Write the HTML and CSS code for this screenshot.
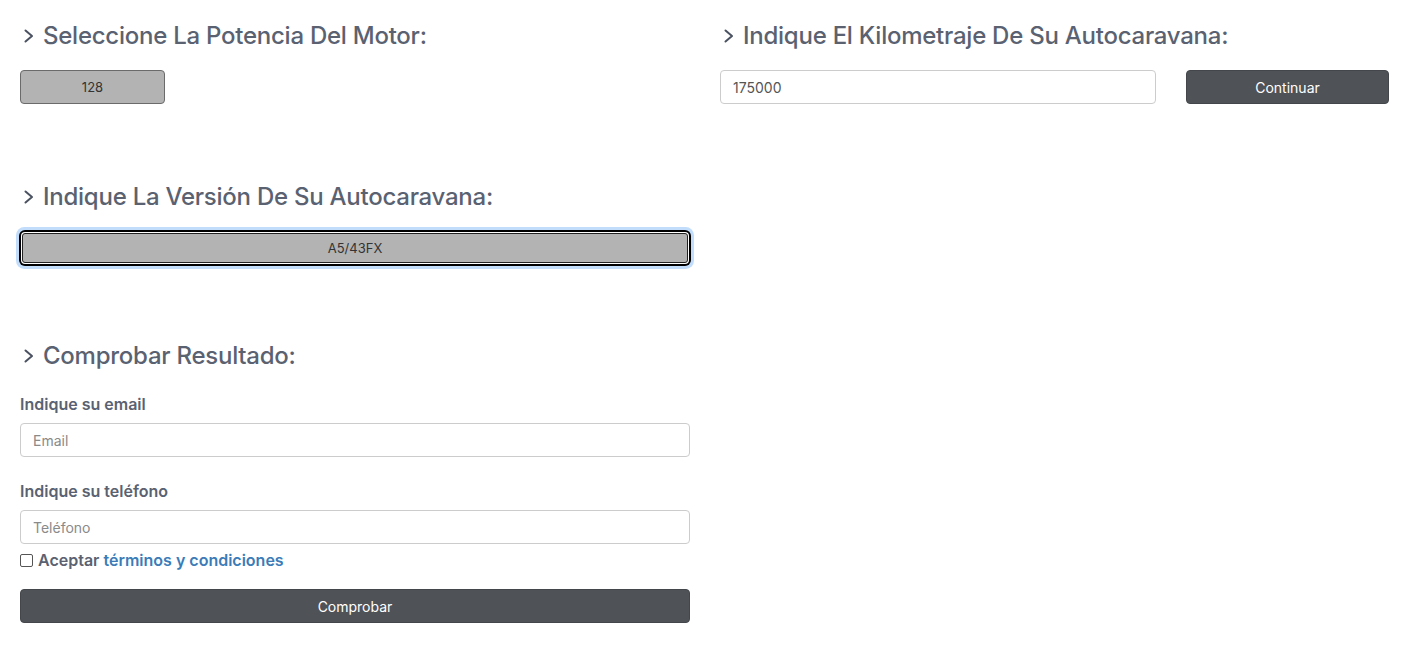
FILE: index.html
```html
<!DOCTYPE html>
<html lang="es">
<head>
<meta charset="utf-8">
<title>Autocaravana</title>
<link rel="stylesheet" href="styles.css">
</head>
<body>
<div class="page">
  <div class="col">
    <section class="step">
      <h2 class="title"><svg class="chev" viewBox="0 0 12 16" width="12" height="16"><path d="M2.5 2.5 L9 8 L2.5 13.5" fill="none" stroke="currentColor" stroke-width="2" stroke-linecap="round" stroke-linejoin="round"/></svg>Seleccione La Potencia Del Motor:</h2>
      <button class="opt opt-small">128</button>
    </section>
    <section class="step step-2">
      <h2 class="title"><svg class="chev" viewBox="0 0 12 16" width="12" height="16"><path d="M2.5 2.5 L9 8 L2.5 13.5" fill="none" stroke="currentColor" stroke-width="2" stroke-linecap="round" stroke-linejoin="round"/></svg>Indique La Versión De Su Autocaravana:</h2>
      <button class="opt opt-full focused">A5/43FX</button>
    </section>
    <section class="step step-3">
      <h2 class="title"><svg class="chev" viewBox="0 0 12 16" width="12" height="16"><path d="M2.5 2.5 L9 8 L2.5 13.5" fill="none" stroke="currentColor" stroke-width="2" stroke-linecap="round" stroke-linejoin="round"/></svg>Comprobar Resultado:</h2>
      <label class="lbl">Indique su email</label>
      <input class="field" type="text" placeholder="Email">
      <label class="lbl lbl-2">Indique su teléfono</label>
      <input class="field" type="text" placeholder="Teléfono">
      <div class="check"><span class="box"></span><span>Aceptar <a href="#">términos y condiciones</a></span></div>
      <button class="dark-btn wide">Comprobar</button>
    </section>
  </div>
  <div class="col">
    <section class="step">
      <h2 class="title"><svg class="chev" viewBox="0 0 12 16" width="12" height="16"><path d="M2.5 2.5 L9 8 L2.5 13.5" fill="none" stroke="currentColor" stroke-width="2" stroke-linecap="round" stroke-linejoin="round"/></svg>Indique El Kilometraje De Su Autocaravana:</h2>
      <div class="km-row">
        <input class="field km" type="text" value="175000">
        <button class="dark-btn">Continuar</button>
      </div>
    </section>
  </div>
</div>
</body>
</html>
```
FILE: styles.css
```css
* { box-sizing: border-box; }
html, body { margin: 0; padding: 0; background: #fff; }
body { font-family: Inter, "Noto Sans", sans-serif; color: #5a6271; }
.page {
  display: grid;
  grid-template-columns: 670px 669px;
  column-gap: 30px;
  padding: 0 19px 0 20px;
}
.col { display: flex; flex-direction: column; }
.step { display: flex; flex-direction: column; }
.title {
  display: flex; align-items: center;
  margin: 22px 0 0 0;
  font-size: 24px; font-weight: 500; line-height: 28px;
  color: #5a6271;
  letter-spacing: -0.25px;
}
.chev { width: 12px; height: 16px; margin: 0 8px 0 3px; color: #4a5160; flex: none; }
.opt {
  font-family: inherit; font-size: 13px; color: #333;
  background: #b3b3b3; border: 1px solid #6b6b6b; border-radius: 4px;
  height: 34px; margin-top: 20px; padding: 0;
}
.opt-small { width: 145px; }
.step-2 { margin-top: 57px; }
.step-3 { margin-top: 57px; }
.opt-full { width: 666px; margin-left: 2px; height: 30px; margin-top: 22px; }
.focused {
  border: 1px solid #222;
  box-shadow: 0 0 0 1px #fff, 0 0 0 3px #000, 0 0 0 6px #c2ddfb;
  border-radius: 3px;
}
.lbl { font-size: 16px; font-weight: 600; color: #5a6271; margin-top: 24px; line-height: 20px; }
.lbl-2 { margin-top: 24px; }
.field {
  font-family: inherit; font-size: 14px; color: #555;
  height: 34px; border: 1px solid #ccc; border-radius: 4px;
  padding: 0 12px; margin-top: 9px; width: 100%;
}
.field::placeholder { color: #8a8a8a; }
.check {
  display: flex; align-items: center; gap: 5px;
  margin-top: 8px; font-size: 16px; font-weight: 600; color: #5a6271; line-height: 16px;
}
.box { width: 13px; height: 13px; border: 1px solid #555; border-radius: 2px; background: #fff; flex: none; }
.check a { color: #3b7cb8; text-decoration: none; }
.dark-btn {
  font-family: inherit; font-size: 14px; color: #fff;
  background: #4f5256; border: 1px solid #43464a; border-radius: 4px;
  height: 34px; padding: 0;
}
.wide { width: 100%; margin-top: 21px; }
.km-row {
  display: grid; grid-template-columns: 436fr 203fr; column-gap: 30px;
  margin-top: 20px;
}
.km { margin-top: 0; }
```
